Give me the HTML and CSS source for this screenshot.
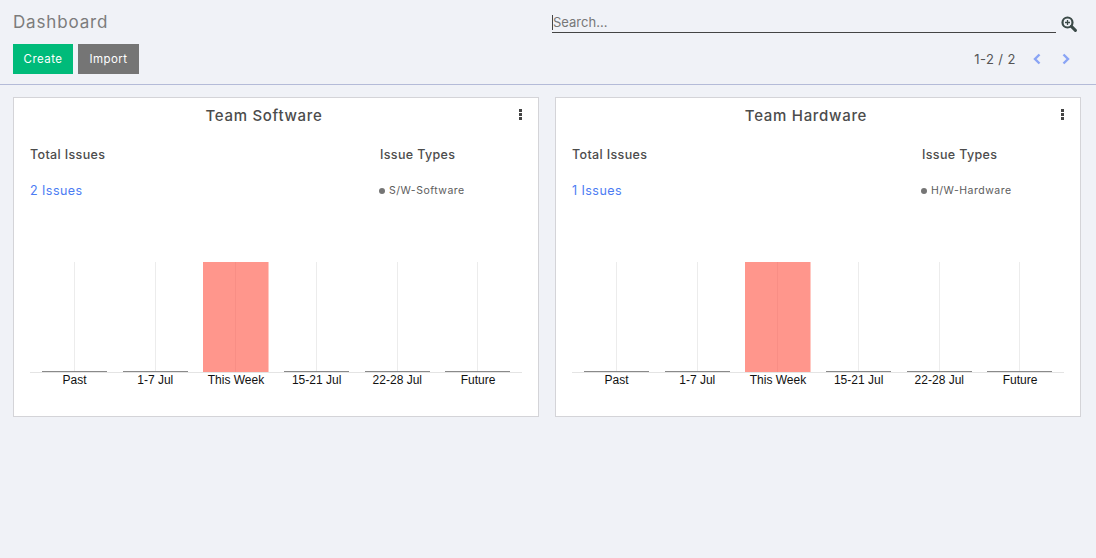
FILE: index.html
```html
<!DOCTYPE html>
<html lang="en">
<head>
    <meta charset="UTF-8">
    <title>Dashboard</title>
    <link rel="stylesheet" href="styles.css">
</head>
<body>
    <div class="control-panel">
        <div class="panel-row">
            <h1 class="page-title">Dashboard</h1>
            <div class="search-box">
                <div class="search-input"><span class="search-text">Search...</span></div>
                <svg class="search-icon" width="16" height="16" viewBox="0 0 16 16">
                    <circle cx="6.5" cy="6.5" r="5" fill="none" stroke="#3b4a48" stroke-width="2.2"/>
                    <path d="M10.4 10.4 L14.4 14.4" stroke="#3b4a48" stroke-width="3" stroke-linecap="round"/>
                    <path d="M6.5 4 V9 M4 6.5 H9" stroke="#3b4a48" stroke-width="1.3"/>
                </svg>
            </div>
        </div>
        <div class="panel-row panel-row-buttons">
            <div class="buttons">
                <button class="btn btn-create">Create</button>
                <button class="btn btn-import">Import</button>
            </div>
            <div class="pager">
                <span class="pager-count">1-2 / 2</span>
                <svg class="pager-arrow" width="10" height="12" viewBox="0 0 10 12">
                    <path d="M7.5 1.5 L3 6 L7.5 10.5" fill="none" stroke="#8aa4f5" stroke-width="2.4"/>
                </svg>
                <svg class="pager-arrow" width="10" height="12" viewBox="0 0 10 12">
                    <path d="M2.5 1.5 L7 6 L2.5 10.5" fill="none" stroke="#8aa4f5" stroke-width="2.4"/>
                </svg>
            </div>
        </div>
    </div>

    <div class="cards">
        <div class="card">
            <div class="card-head">
                <div class="card-title">Team Software</div>
                <div class="kebab"><i></i><i></i><i></i></div>
            </div>
            <div class="card-info">
                <div>
                    <div class="info-label">Total Issues</div>
                    <a class="issue-link">2 Issues</a>
                </div>
                <div>
                    <div class="info-label">Issue Types</div>
                    <div class="legend"><span class="legend-dot"></span>S/W-Software</div>
                </div>
            </div>
            <div class="chart">
                <div class="chart-col"><div class="bar-line"></div><span class="chart-label">Past</span></div>
                <div class="chart-col"><div class="bar-line"></div><span class="chart-label">1-7 Jul</span></div>
                <div class="chart-col"><div class="bar-line bar-full"></div><span class="chart-label">This Week</span></div>
                <div class="chart-col"><div class="bar-line"></div><span class="chart-label">15-21 Jul</span></div>
                <div class="chart-col"><div class="bar-line"></div><span class="chart-label">22-28 Jul</span></div>
                <div class="chart-col"><div class="bar-line"></div><span class="chart-label">Future</span></div>
            </div>
        </div>

        <div class="card">
            <div class="card-head">
                <div class="card-title">Team Hardware</div>
                <div class="kebab"><i></i><i></i><i></i></div>
            </div>
            <div class="card-info">
                <div>
                    <div class="info-label">Total Issues</div>
                    <a class="issue-link">1 Issues</a>
                </div>
                <div>
                    <div class="info-label">Issue Types</div>
                    <div class="legend"><span class="legend-dot"></span>H/W-Hardware</div>
                </div>
            </div>
            <div class="chart">
                <div class="chart-col"><div class="bar-line"></div><span class="chart-label">Past</span></div>
                <div class="chart-col"><div class="bar-line"></div><span class="chart-label">1-7 Jul</span></div>
                <div class="chart-col"><div class="bar-line bar-full"></div><span class="chart-label">This Week</span></div>
                <div class="chart-col"><div class="bar-line"></div><span class="chart-label">15-21 Jul</span></div>
                <div class="chart-col"><div class="bar-line"></div><span class="chart-label">22-28 Jul</span></div>
                <div class="chart-col"><div class="bar-line"></div><span class="chart-label">Future</span></div>
            </div>
        </div>
    </div>
</body>
</html>
```

FILE: styles.css
```css
html, body {
    height: 100%;
}
body {
    margin: 0;
    background: #f0f2f7;
    font-family: Inter, "Noto Sans", sans-serif;
    color: #4c4c4c;
    overflow: hidden;
}
.control-panel {
    height: 84px;
    padding: 0 19px 0 13px;
    border-bottom: 1px solid #b4bbd8;
}
.panel-row {
    display: flex;
    justify-content: space-between;
    align-items: flex-start;
}
.panel-row-buttons {
    align-items: center;
    padding-right: 6px;
}
.page-title {
    margin: 0;
    padding-top: 12px;
    height: 32px;
    font-size: 17px;
    line-height: 20px;
    font-weight: 400;
    letter-spacing: 0.85px;
    color: #7c7c7c;
}
.search-box {
    display: flex;
    align-items: flex-start;
    gap: 5px;
    padding-top: 15px;
}
.search-input {
    width: 504px;
    height: 17px;
    border-bottom: 1px solid #444;
    font-size: 13px;
    line-height: 15px;
    color: #777;
}
.search-text {
    display: inline-block;
    border-left: 1px solid #444;
}
.search-icon {
    margin-top: 1px;
}
.buttons {
    display: flex;
    gap: 5px;
}
.btn {
    height: 30px;
    border: none;
    padding: 0;
    font-family: inherit;
    font-size: 11.5px;
    letter-spacing: 0.45px;
    color: #fff;
}
.btn-create {
    width: 60px;
    background: #00bb7a;
}
.btn-import {
    width: 61px;
    background: #757575;
}
.pager {
    display: flex;
    align-items: center;
    gap: 19px;
}
.pager-count {
    font-size: 13px;
    letter-spacing: 0.45px;
    margin-right: -3px;
    color: #555;
}
.cards {
    display: flex;
    gap: 16px;
    padding: 12px 15px 0 13px;
}
.card {
    flex: 1;
    height: 320px;
    box-sizing: border-box;
    background: #fff;
    border: 1px solid #d4d4d8;
    padding: 0 16px;
}
.card-head {
    display: flex;
    height: 36px;
}
.card-title {
    flex: 1;
    padding-top: 8px;
    text-align: center;
    font-size: 15px;
    line-height: 20px;
    font-weight: 500;
    letter-spacing: 0.7px;
    color: #4c4c4c;
}
.kebab {
    width: 24px;
    display: flex;
    flex-direction: column;
    align-items: flex-end;
    gap: 1px;
    padding-top: 11px;
    box-sizing: border-box;
}
.kebab i {
    width: 3px;
    height: 3px;
    background: #444;
}
.card-info {
    display: grid;
    grid-template-columns: 350px 1fr;
    height: 128px;
    padding-top: 12px;
    box-sizing: border-box;
}
.info-label {
    font-size: 12.5px;
    line-height: 18px;
    font-weight: 500;
    letter-spacing: 0.35px;
    color: #4c4c4c;
}
.issue-link {
    display: block;
    margin-top: 18px;
    font-size: 12.5px;
    line-height: 18px;
    letter-spacing: 0.45px;
    color: #4c7cf3;
}
.legend {
    display: flex;
    align-items: center;
    margin-top: 18px;
    margin-left: -1px;
    font-size: 10.5px;
    line-height: 18px;
    letter-spacing: 0.5px;
    color: #5c5c5c;
}
.legend-dot {
    width: 6px;
    height: 6px;
    margin-right: 4px;
    border-radius: 50%;
    background: #757575;
}
.chart {
    display: grid;
    grid-template-columns: repeat(6, 1fr);
    padding: 0 3.7px 0 4.3px;
    height: 132px;
    background: linear-gradient(#e4e4e4, #e4e4e4) no-repeat 0 110px / 100% 1px;
}
.chart-col {
    display: flex;
    flex-direction: column;
    align-items: center;
}
.bar-line {
    box-sizing: border-box;
    width: 65px;
    height: 110px;
    border-bottom: 1px solid #8a8a8a;
    background: linear-gradient(#ececec, #ececec) no-repeat center / 1px 100%;
}
.bar-full {
    border-bottom: none;
    background: linear-gradient(#f88e85, #f88e85) no-repeat center / 1px 100%, #ff968c;
    box-shadow: 1px 0 0 #ffc8c2;
}
.chart-label {
    margin-top: 1px;
    font-family: "Liberation Sans", Arial, sans-serif;
    font-size: 12px;
    line-height: 14px;
    color: #111;
}
```
